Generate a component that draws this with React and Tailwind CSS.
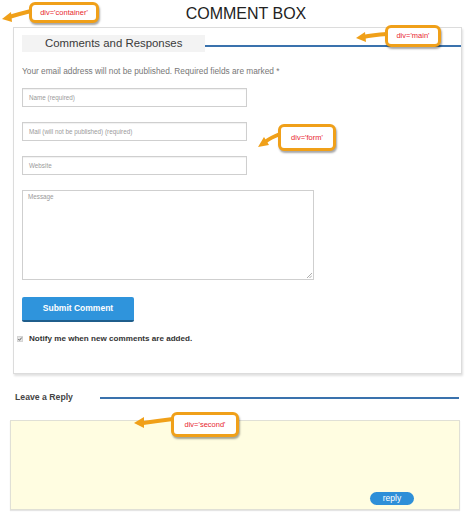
import React from "react"

const Callout = ({ label, className, arrow }) => (
  <div className={`absolute ${className}`}>
    <svg className="absolute left-0 top-0 overflow-visible" width="1" height="1">
      <path d={arrow.line} fill="none" stroke="#f0a019" strokeWidth="4" strokeLinecap="round" />
      <path d={arrow.head} fill="#f0a019" />
    </svg>
    <div className="relative flex h-full w-full items-center justify-center rounded-[6px] border-[3px] border-[#f0a019] bg-white shadow-[1px_2px_2px_rgba(0,0,0,0.35)]">
      <span className="text-[7.5px] leading-none text-[#e8262e]">{label}</span>
    </div>
  </div>
)

const Field = ({ placeholder }) => (
  <div className="flex h-[19px] w-[225px] items-center border border-[#cfcfcf] pl-[6px] shadow-[inset_0_1px_1px_rgba(0,0,0,0.06)]">
    <span className="text-[6.3px] text-[#9a9a9a]">{placeholder}</span>
  </div>
)

export default function App() {
  return (
    <div className="relative h-[523px] w-[474px] overflow-hidden bg-white font-['Liberation_Sans',Arial,sans-serif]">
      <h1 className="h-[27px] pl-[18px] pt-[5px] text-center text-[16px] leading-[18px] text-[#222]">
        COMMENT BOX
      </h1>

      {/* main */}
      <div className="ml-[13px] flex h-[347px] w-[449px] flex-col border border-[#dcdcdc] pl-[8px] shadow-[1px_2px_2px_rgba(0,0,0,0.12)]">
        <div className="mt-[7px] flex items-end">
          <div className="flex h-[17px] w-[183px] items-center bg-[#f3f3f3] pl-[23px]">
            <span className="text-[11.4px] text-[#3a3a3a]">Comments and Responses</span>
          </div>
          <div className="mb-[5px] h-[2px] flex-1 bg-[#3a72ad]" />
        </div>

        <p className="mt-[13px] text-[8.3px] leading-[12px] text-[#777]">
          Your email address will not be published. Required fields are marked *
        </p>

        <div className="mt-[11px] flex flex-col gap-[15px]">
          <Field placeholder="Name (required)" />
          <Field placeholder="Mail (will not be published) (required)" />
          <Field placeholder="Website" />
        </div>

        <div className="relative mt-[15px] h-[90px] w-[292px] border border-[#cfcfcf] pl-[5px] pt-[1px] text-[6.3px] leading-[9px] text-[#9a9a9a]">
          Message
          <svg className="absolute bottom-[1px] right-[1px]" width="6" height="6">
            <path d="M1 6 L6 1 M3.5 6 L6 3.5" stroke="#999" strokeWidth="0.8" />
          </svg>
        </div>

        <button className="mt-[17px] flex h-[25px] w-[112px] items-center justify-center rounded-[2px] border-b-2 border-[#1f5e8c] bg-[#2f94dc] text-[8.5px] font-bold text-white">
          Submit Comment
        </button>

        <div className="-ml-[5px] mt-[11px] flex items-center gap-[6px]">
          <svg width="6" height="6" viewBox="0 0 6 6">
            <rect x="0.25" y="0.25" width="5.5" height="5.5" rx="1" fill="#e6e6e6" stroke="#aaa" strokeWidth="0.5" />
            <path d="M1.3 3 L2.5 4.3 L4.7 1.6" fill="none" stroke="#555" strokeWidth="0.9" />
          </svg>
          <span className="text-[8.1px] font-bold text-[#333]">Notify me when new comments are added.</span>
        </div>
      </div>

      {/* second heading */}
      <div className="mt-[16px] flex items-center pl-[15px]">
        <span className="w-[85px] text-[8.7px] font-bold leading-[14px] text-[#444]">Leave a Reply</span>
        <div className="mt-[2px] h-[2px] w-[359px] bg-[#3a72ad]" />
      </div>

      {/* second */}
      <div className="ml-[10px] mt-[16px] flex h-[90px] w-[450px] items-end justify-end border border-[#e0e0d6] bg-[#fffde1] pb-[4px] pr-[45px] shadow-[0_1px_1px_rgba(0,0,0,0.1)]">
        <div className="flex h-[13px] w-[44px] items-center justify-center rounded-full bg-[#2e8fd8] text-[8.5px] leading-none text-white">
          reply
        </div>
      </div>

      <Callout
        label="div='container'"
        className="left-[29px] top-[2px] h-[21px] w-[70px]"
        arrow={{ line: "M2 9 Q -10 12 -20 15", head: "M-27 17 L-18 10 L-17 20 Z" }}
      />
      <Callout
        label="div='main'"
        className="left-[385px] top-[25px] h-[22px] w-[56px]"
        arrow={{ line: "M2 9 Q -12 10 -22 12", head: "M-29 13 L-20 7 L-19 17 Z" }}
      />
      <Callout
        label="div='form'"
        className="left-[278px] top-[124px] h-[27px] w-[58px]"
        arrow={{ line: "M2 10 Q -8 14 -13 18", head: "M-20 23 L-14 13 L-9 21 Z" }}
      />
      <Callout
        label="div='second'"
        className="left-[171px] top-[412px] h-[25px] w-[68px]"
        arrow={{ line: "M2 7 Q -14 9 -28 11", head: "M-37 11 L-27 5 L-27 16 Z" }}
      />
    </div>
  )
}
